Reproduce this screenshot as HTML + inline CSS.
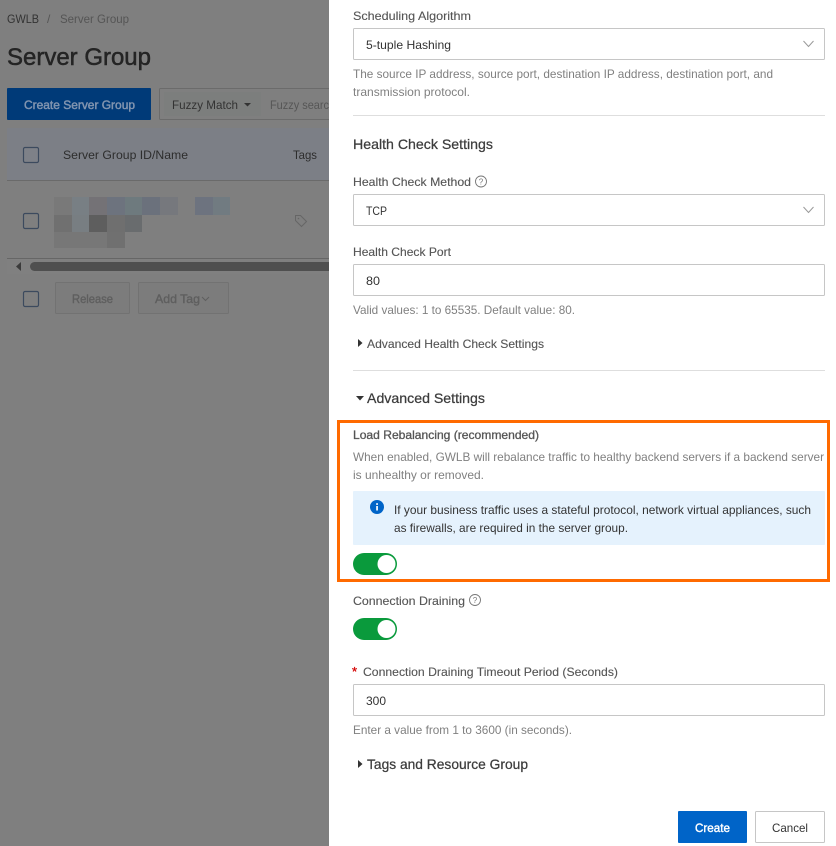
<!DOCTYPE html>
<html lang="en"><head><meta charset="utf-8"><title>Server Group</title>
<style>
html,body{margin:0;padding:0;width:836px;height:846px;overflow:hidden;background:#fff}
svg{display:block}
text{font-family:"Liberation Sans",Arial,sans-serif;font-size:12px;fill:#333}
.g{fill:#808080}.l{fill:#555;stroke:#555;stroke-width:.12}.h{font-size:14px;fill:#3c3c3c;stroke:#3c3c3c;stroke-width:.25}
.box{fill:#fff;stroke:#c6c6c6;stroke-width:1}
</style></head><body>
<svg width="836" height="846" viewBox="0 0 836 846" xmlns="http://www.w3.org/2000/svg">
<!-- left dimmed page -->
<rect x="0" y="0" width="329" height="846" fill="#7f7f7f"/>
<text x="7" y="23" textLength="32" lengthAdjust="spacingAndGlyphs" style="fill:#333">GWLB</text>
<text x="47" y="23" style="fill:#555">/</text>
<text x="60" y="23" textLength="69" lengthAdjust="spacingAndGlyphs" style="fill:#555">Server Group</text>
<text x="7" y="65" textLength="144" lengthAdjust="spacingAndGlyphs" style="font-size:24px;fill:#242424;stroke:#242424;stroke-width:.5">Server Group</text>
<rect x="7" y="88" width="144" height="32" rx="1" fill="#003a78"/>
<text x="24" y="109" textLength="111" lengthAdjust="spacingAndGlyphs" style="fill:#8295b0;stroke:#8295b0;stroke-width:.45">Create Server Group</text>
<rect x="159.500" y="88.500" width="180" height="31" rx="1" fill="none" stroke="#6b6b6b"/>
<rect x="164" y="92" width="97" height="24" fill="#7c7e7d"/>
<text x="172" y="109" textLength="66" lengthAdjust="spacingAndGlyphs" style="fill:#333">Fuzzy Match</text>
<path d="M244 103h7l-3.500 3.500z" fill="#333"/>
<text x="270" y="109" textLength="59" lengthAdjust="spacingAndGlyphs" style="fill:#565656">Fuzzy searc</text>
<rect x="7" y="128" width="322" height="53" fill="#7c7f86"/>
<rect x="7" y="180" width="322" height="1" fill="#6a6a6a"/>
<rect x="23.500" y="147.500" width="15" height="15" rx="1.500" fill="#7e8188" stroke="#3c4a5e" stroke-width="1.200"/>
<text x="63" y="159" textLength="125" lengthAdjust="spacingAndGlyphs" style="fill:#2d2d2d">Server Group ID/Name</text>
<text x="293" y="159" textLength="24" lengthAdjust="spacingAndGlyphs" style="fill:#2d2d2d">Tags</text>
<rect x="23.500" y="213.500" width="15" height="15" rx="1.500" fill="#7f7f7f" stroke="#3c4a5e" stroke-width="1.200"/>
<!-- mosaic -->
<g>
<rect x="54" y="197" width="18" height="18" fill="#797979"/><rect x="72" y="197" width="17" height="18" fill="#787f84"/><rect x="89" y="197" width="18" height="18" fill="#747276"/><rect x="107" y="197" width="18" height="18" fill="#6d737e"/><rect x="125" y="197" width="17" height="18" fill="#6e7a7e"/><rect x="142" y="197" width="18" height="18" fill="#6b717c"/><rect x="160" y="197" width="18" height="18" fill="#76787d"/><rect x="195" y="197" width="18" height="18" fill="#6d737f"/><rect x="213" y="197" width="17" height="18" fill="#717b81"/>
<rect x="54" y="215" width="18" height="17" fill="#707070"/><rect x="72" y="215" width="17" height="17" fill="#787e82"/><rect x="89" y="215" width="18" height="17" fill="#5e5e5e"/><rect x="107" y="215" width="18" height="17" fill="#6f6f6f"/><rect x="125" y="215" width="17" height="17" fill="#696c6e"/>
<rect x="54" y="232" width="53" height="16" fill="#777"/><rect x="107" y="232" width="18" height="16" fill="#707070"/>
</g>
<path d="M295.500 215.500h5l6 6-5 5-6-6z" fill="none" stroke="#666" stroke-width="1"/>
<circle cx="298.500" cy="218.500" r=".8" fill="#666"/>
<rect x="7" y="258" width="322" height="1" fill="#666"/>
<rect x="7" y="259" width="322" height="15" fill="#808080"/>
<path d="M21 262v9l-5-4.500z" fill="#3b3b3b"/>
<rect x="30" y="262" width="310" height="9" rx="4.500" fill="#4f4f4f"/>
<rect x="23.500" y="291.500" width="15" height="15" rx="1.500" fill="#7f7f7f" stroke="#3c4a5e" stroke-width="1.200"/>
<rect x="55.500" y="282.500" width="74" height="31" rx="1" fill="#7c7c7c" stroke="#727272"/>
<text x="72" y="303" textLength="41" lengthAdjust="spacingAndGlyphs" style="fill:#5f5f5f;stroke:#5f5f5f;stroke-width:.4">Release</text>
<rect x="138.500" y="282.500" width="90" height="31" rx="1" fill="#7c7c7c" stroke="#727272"/>
<text x="155" y="303" textLength="45" lengthAdjust="spacingAndGlyphs" style="fill:#5f5f5f;stroke:#5f5f5f;stroke-width:.4">Add Tag</text>
<path d="M202 297l3.500 3.500 3.500-3.500" fill="none" stroke="#5f5f5f"/>

<!-- drawer -->
<rect x="329" y="0" width="507" height="846" fill="#fff"/>
<text x="353" y="20" textLength="118" lengthAdjust="spacingAndGlyphs" class="l">Scheduling Algorithm</text>
<rect class="box" x="353.500" y="28.500" width="471" height="31" rx="1"/>
<text x="366" y="49" textLength="85" lengthAdjust="spacingAndGlyphs">5-tuple Hashing</text>
<path d="M803.500 41l5 5.500 5-5.500" fill="none" stroke="#999" stroke-width="1"/>
<text x="353" y="78" textLength="420" lengthAdjust="spacingAndGlyphs" class="g">The source IP address, source port, destination IP address, destination port, and</text>
<text x="353" y="96" textLength="117" lengthAdjust="spacingAndGlyphs" class="g">transmission protocol.</text>
<rect x="353" y="115" width="472" height="1" fill="#dedede"/>
<text x="353" y="149" textLength="140" lengthAdjust="spacingAndGlyphs" class="h">Health Check Settings</text>
<text x="353" y="186" textLength="118" lengthAdjust="spacingAndGlyphs" class="l">Health Check Method</text>
<circle cx="481" cy="181.500" r="5.500" fill="none" stroke="#777" stroke-width=".9"/>
<text x="481" y="184.500" text-anchor="middle" style="font-size:8px;fill:#777">?</text>
<rect class="box" x="353.500" y="194.500" width="471" height="31" rx="1"/>
<text x="366" y="215" textLength="21" lengthAdjust="spacingAndGlyphs">TCP</text>
<path d="M803.500 207l5 5.500 5-5.500" fill="none" stroke="#999" stroke-width="1"/>
<text x="353" y="256" textLength="98" lengthAdjust="spacingAndGlyphs" class="l">Health Check Port</text>
<rect class="box" x="353.500" y="264.500" width="471" height="31" rx="1"/>
<text x="366" y="285" textLength="14" lengthAdjust="spacingAndGlyphs">80</text>
<text x="353" y="314" textLength="222" lengthAdjust="spacingAndGlyphs" class="g">Valid values: 1 to 65535. Default value: 80.</text>
<path d="M358 339v8l4.500-4z" fill="#333"/>
<text x="367" y="348" textLength="177" lengthAdjust="spacingAndGlyphs" class="l">Advanced Health Check Settings</text>
<rect x="353" y="370" width="472" height="1" fill="#dedede"/>
<path d="M356 396h8l-4 4.500z" fill="#333"/>
<text x="367" y="403" textLength="118" lengthAdjust="spacingAndGlyphs" class="h">Advanced Settings</text>

<rect x="338.500" y="421.500" width="490" height="159" fill="none" stroke="#ff6a00" stroke-width="3"/>
<text x="353" y="439" textLength="186" lengthAdjust="spacingAndGlyphs" class="l" style="stroke-width:.3">Load Rebalancing (recommended)</text>
<text x="353" y="461" textLength="471" lengthAdjust="spacingAndGlyphs" class="g">When enabled, GWLB will rebalance traffic to healthy backend servers if a backend server</text>
<text x="353" y="479" textLength="131" lengthAdjust="spacingAndGlyphs" class="g">is unhealthy or removed.</text>
<rect x="353" y="491" width="472" height="54" rx="1" fill="#e5f2fd"/>
<circle cx="377" cy="507" r="7" fill="#0064c8"/>
<rect x="376.200" y="506" width="1.700" height="4.500" fill="#fff"/><rect x="376.200" y="503.200" width="1.700" height="1.700" fill="#fff"/>
<text x="394" y="514" textLength="417" lengthAdjust="spacingAndGlyphs">If your business traffic uses a stateful protocol, network virtual appliances, such</text>
<text x="394" y="532" textLength="234" lengthAdjust="spacingAndGlyphs">as firewalls, are required in the server group.</text>
<rect x="353" y="553" width="44" height="22" rx="11" fill="#0a9a3c"/>
<circle cx="386.500" cy="564" r="9" fill="#fff"/>

<text x="353" y="605" textLength="112" lengthAdjust="spacingAndGlyphs" class="l">Connection Draining</text>
<circle cx="475" cy="600" r="5.500" fill="none" stroke="#777" stroke-width=".9"/>
<text x="475" y="603" text-anchor="middle" style="font-size:8px;fill:#777">?</text>
<rect x="353" y="618" width="44" height="22" rx="11" fill="#0a9a3c"/>
<circle cx="386.500" cy="629" r="9" fill="#fff"/>

<text x="352" y="676" style="font-size:13px;fill:#d40000;stroke:#d40000;stroke-width:.3">*</text>
<text x="363" y="676" textLength="255" lengthAdjust="spacingAndGlyphs" class="l">Connection Draining Timeout Period (Seconds)</text>
<rect class="box" x="353.500" y="684.500" width="471" height="31" rx="1"/>
<text x="366" y="705" textLength="20" lengthAdjust="spacingAndGlyphs">300</text>
<text x="353" y="734" textLength="219" lengthAdjust="spacingAndGlyphs" class="g">Enter a value from 1 to 3600 (in seconds).</text>
<path d="M358 760v8l4.500-4z" fill="#333"/>
<text x="367" y="769" textLength="161" lengthAdjust="spacingAndGlyphs" class="h">Tags and Resource Group</text>

<rect x="678" y="811" width="69" height="32" rx="1" fill="#0064c8"/>
<text x="695" y="832" textLength="35" lengthAdjust="spacingAndGlyphs" style="fill:#fff;stroke:#fff;stroke-width:.4">Create</text>
<rect class="box" x="755.500" y="811.500" width="69" height="31" rx="1"/>
<text x="772" y="832" textLength="36" lengthAdjust="spacingAndGlyphs" style="fill:#333">Cancel</text>
</svg>
</body></html>
